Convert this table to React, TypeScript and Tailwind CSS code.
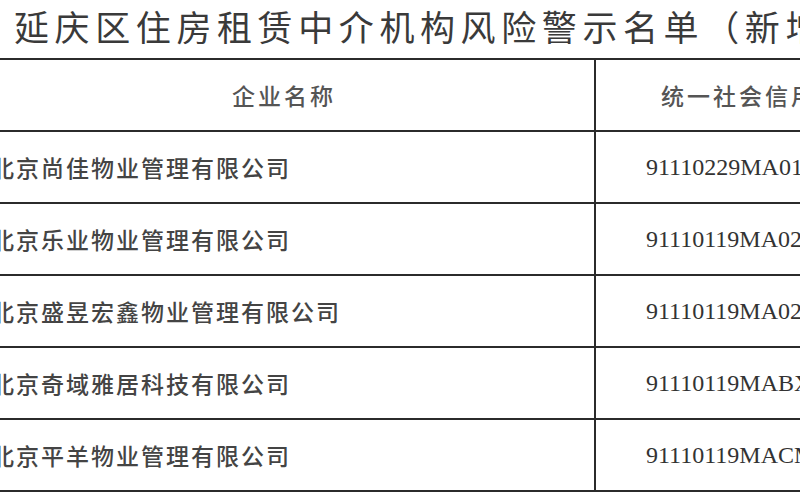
const ROWS = [
  { name: "北京尚佳物业管理有限公司", code: "91110229MA01Y6QK3R" },
  { name: "北京乐业物业管理有限公司", code: "91110119MA029N8L5X" },
  { name: "北京盛昱宏鑫物业管理有限公司", code: "91110119MA02DH7T1K" },
  { name: "北京奇域雅居科技有限公司", code: "91110119MABX0R2G4W" },
  { name: "北京平羊物业管理有限公司", code: "91110119MACMB5J86P" },
];

const cjk = "font-['Noto_Sans_CJK_SC','Noto_Sans',sans-serif]";

export default function App() {
  return (
    <div className="h-[500px] w-[800px] overflow-hidden bg-white text-[#3a3a3a]">
      <h1
        className={`h-[58px] whitespace-nowrap pl-[14px] pt-[3px] text-[35px] font-normal leading-[46px] tracking-[5.6px] ${cjk}`}
      >
        延庆区住房租赁中介机构风险警示名单（新增）
      </h1>

      <table className="ml-[-28px] w-[962px] table-fixed border-collapse">
        <colgroup>
          <col className="w-[622px]" />
          <col className="w-[340px]" />
        </colgroup>
        <thead>
          <tr className="h-[72px]">
            <th
              className={`border-2 border-[#2b2b2b] text-center text-[23px] font-medium tracking-[3px] text-[#555] ${cjk}`}
            >
              企业名称
            </th>
            <th
              className={`border-2 border-[#2b2b2b] text-center text-[23px] font-medium tracking-[3px] text-[#555] ${cjk}`}
            >
              统一社会信用代码
            </th>
          </tr>
        </thead>
        <tbody>
          {ROWS.map((row) => (
            <tr key={row.code} className="h-[72px]">
              <td
                className={`whitespace-nowrap border-2 border-[#2b2b2b] pl-[17px] text-[23px] font-medium tracking-[2px] text-[#444] ${cjk}`}
              >
                {row.name}
              </td>
              <td className="whitespace-nowrap border-2 border-[#2b2b2b] pl-[50px] text-left font-['Liberation_Serif',serif] text-[24px] text-[#333]">
                {row.code}
              </td>
            </tr>
          ))}
        </tbody>
      </table>
    </div>
  );
}
